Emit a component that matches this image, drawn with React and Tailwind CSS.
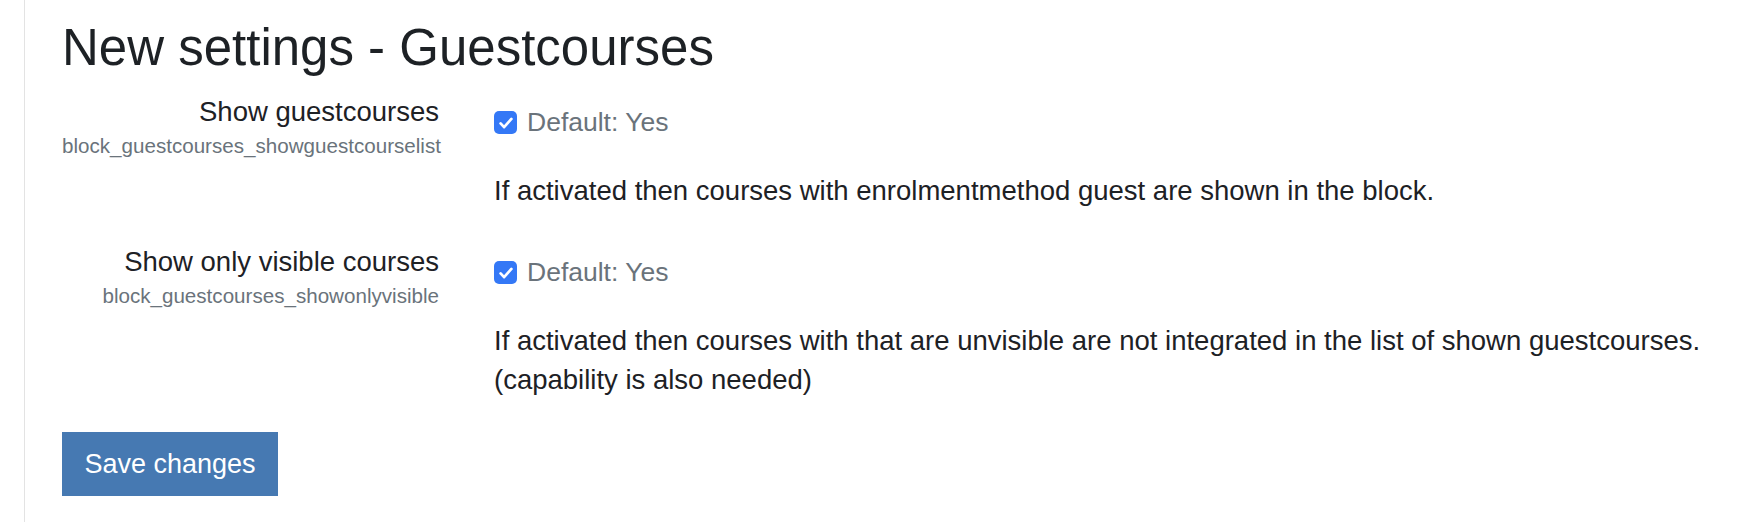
import React from 'react';

const SETTINGS = [
    {
        label: 'Show guestcourses',
        name: 'block_guestcourses_showguestcourselist',
        lines: [
            'If activated then courses with enrolmentmethod guest are shown in the block.',
        ],
    },
    {
        label: 'Show only visible courses',
        name: 'block_guestcourses_showonlyvisible',
        lines: [
            'If activated then courses with that are unvisible are not integrated in the list of shown guestcourses.',
            '(capability is also needed)',
        ],
    },
];

function Checkbox() {
    return (
        <span className="flex h-[23px] w-[23px] items-center justify-center rounded-[5px] bg-[#3478f6]">
            <svg width="18" height="18" viewBox="0 0 16 16" fill="none">
                <path
                    d="M3.2 8.4l3.1 3.3L12.8 4.4"
                    stroke="white"
                    strokeWidth="2.4"
                    strokeLinecap="round"
                    strokeLinejoin="round"
                />
            </svg>
        </span>
    );
}

export default function App() {
    return (
        <div
            className="min-h-screen bg-white text-[#1d2125]"
            style={{ fontFamily: '"Liberation Sans", Arial, sans-serif' }}
        >
            <div className="ml-[24px] min-h-[522px] border-l border-[#e3e3e3] pl-[37px] pt-[18px]">
                <h2 className="text-[51px] font-normal leading-[60px]">
                    New settings - Guestcourses
                </h2>

                <div className="mt-[14px] flex flex-col gap-[32px]">
                    {SETTINGS.map((s) => (
                        <div key={s.name} className="flex">
                            <div className="w-[377px] shrink-0 text-right">
                                <div className="text-[27.5px] leading-[39px]">{s.label}</div>
                                <div className="text-[20.6px] leading-[30px] text-[#6a737b]">
                                    {s.name}
                                </div>
                            </div>
                            <div className="ml-[55px] mt-[11px]">
                                <div className="flex h-[39px] items-center gap-[10px]">
                                    <Checkbox />
                                    <span className="text-[26.5px] text-[#6a737b]">Default: Yes</span>
                                </div>
                                <p className="mt-[29px] whitespace-nowrap text-[27.5px] leading-[39px]">
                                    {s.lines.map((l, i) => (
                                        <React.Fragment key={i}>
                                            {i > 0 && <br />}
                                            {l}
                                        </React.Fragment>
                                    ))}
                                </p>
                            </div>
                        </div>
                    ))}
                </div>

                <button className="mt-[33px] h-[64px] w-[216px] bg-[#4679b2] text-[27px] text-white">
                    Save changes
                </button>
            </div>
        </div>
    );
}
